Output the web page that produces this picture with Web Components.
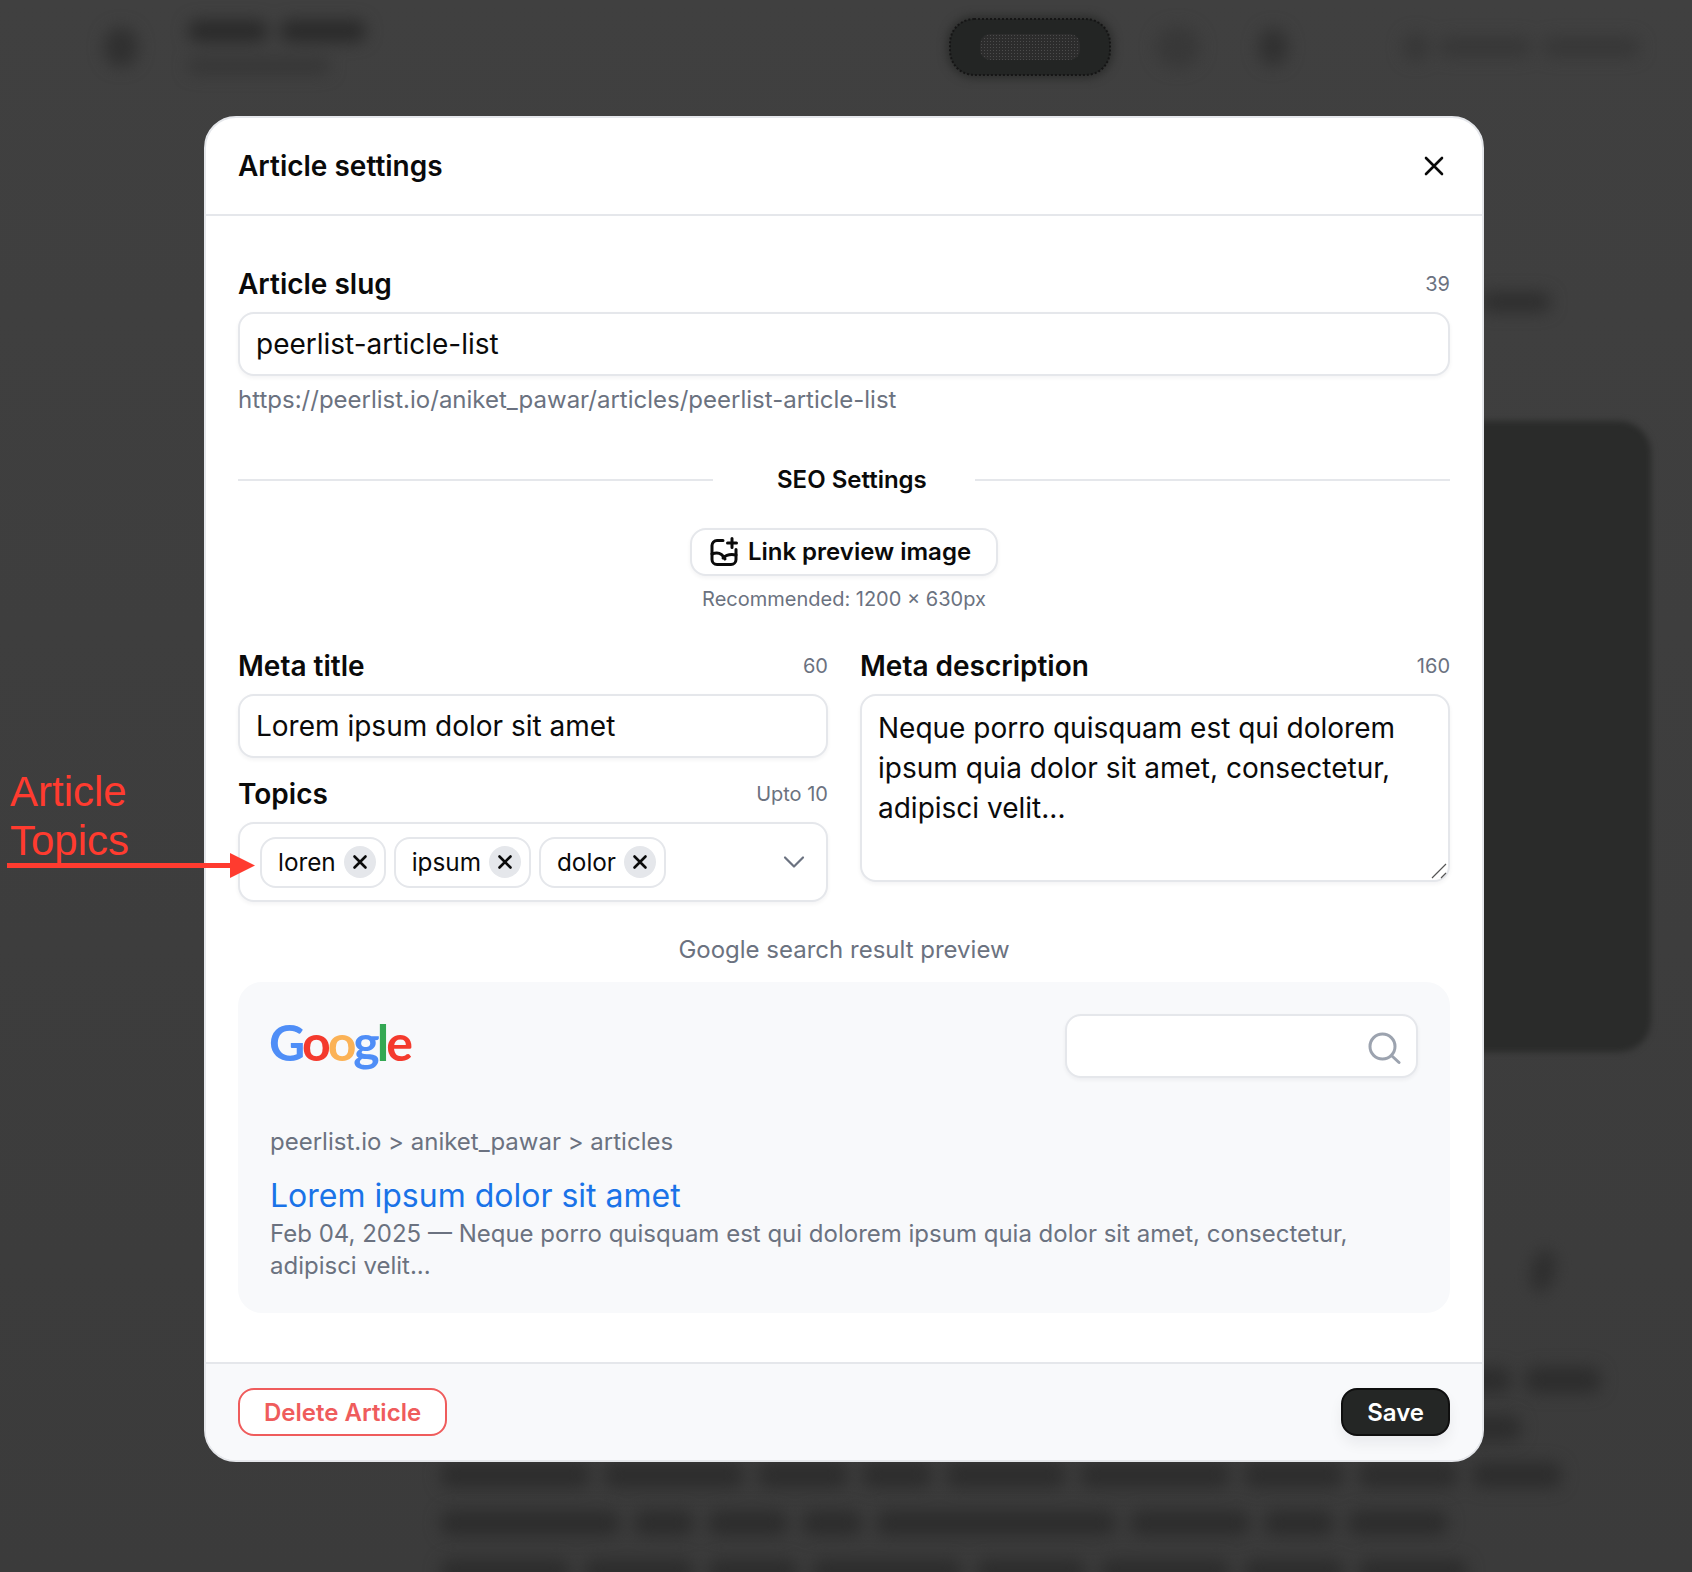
<!DOCTYPE html>
<html lang="en">
<head>
<meta charset="utf-8">
<title>Article settings</title>
<style>
  html, body { margin: 0; padding: 0; }
  body {
    position: relative;
    width: 1692px;
    height: 1572px;
    overflow: hidden;
    background: #3e3e3e;
    font-family: Inter, "Liberation Sans", sans-serif;
    color: #0a0a0a;
  }
</style>
</head>
<body>
<page-backdrop></page-backdrop>

<settings-modal>
  <span slot="title">Article settings</span>

  <field-label count="39">Article slug</field-label>
  <text-box>peerlist-article-list</text-box>
  <hint-text>https://peerlist.io/aniket_pawar/articles/peerlist-article-list</hint-text>

  <seo-divider>SEO Settings</seo-divider>
  <preview-image-button>Link preview image</preview-image-button>

  <meta-grid>
    <div slot="left">
      <field-label count="60">Meta title</field-label>
      <text-box>Lorem ipsum dolor sit amet</text-box>
      <field-label count="Upto 10" style="margin-top:19px">Topics</field-label>
      <topics-box>
        <topic-chip>loren</topic-chip>
        <topic-chip>ipsum</topic-chip>
        <topic-chip>dolor</topic-chip>
      </topics-box>
    </div>
    <div slot="right">
      <field-label count="160">Meta description</field-label>
      <text-area-box>Neque porro quisquam est qui dolorem ipsum quia dolor sit amet, consectetur, adipisci velit...</text-area-box>
    </div>
  </meta-grid>

  <google-preview></google-preview>

  <app-button slot="footer" kind="danger">Delete Article</app-button>
  <app-button slot="footer" kind="primary">Save</app-button>
</settings-modal>

<red-annotation></red-annotation>

<script>
  class PageBackdrop extends HTMLElement {
    constructor() {
      super();
      this.attachShadow({ mode: 'open' });
      this.shadowRoot.innerHTML = `
        <style>
          :host { display: block; height: 1572px; overflow: hidden; background: linear-gradient(#404040, #3b3b3b); }
          .top { display: flex; align-items: center; height: 94px; padding: 0 52px 0 104px; }
          .top > *, .main > * { filter: blur(8px); }
          .b { background: #2f2f2f; border-radius: 12px; }
          .back { width: 34px; height: 40px; border-radius: 50%; background: #303030; }
          .names { display: flex; flex-direction: column; gap: 16px; margin-left: 50px; flex: 1; }
          .t1 { display: flex; gap: 12px; }
          .t1 i { height: 22px; border-radius: 10px; background: #2a2a2a; }
          .t2 { width: 142px; height: 16px; background: #363636; }
          .top > .pill {
            filter: none;
            display: flex;
            align-items: center;
            justify-content: center;
            box-sizing: border-box;
            flex: none;
            width: 160px;
            height: 56px;
            border-radius: 24px;
            background: #232524;
            box-shadow: 0 0 10px 3px #2b2c2b;
            outline: 2px dotted #151515;
            outline-offset: -1px;
          }
          .pill i {
            width: 100px;
            height: 26px;
            border-radius: 10px;
            background-color: #2c2c2c;
            background-image: radial-gradient(#4c4c4c 1px, transparent 1px);
            background-size: 3px 3px;
          }
          .c1 { flex: none; width: 44px; height: 42px; border-radius: 50%; margin-left: 46px; background: #383838; }
          .c2 { flex: none; width: 30px; height: 38px; border-radius: 50%; margin-left: 58px; background: #313131; }
          .who { flex: none; display: flex; align-items: center; gap: 10px; margin-left: 115px; }
          .who i { height: 20px; border-radius: 10px; background: #373737; }
          .main { display: flex; flex-direction: column; padding: 0 41px 0 440px; }
          .s1 { width: 70px; height: 20px; margin: 198px 100px 0 auto; background: #2e2e2e; }
          .main > .block { filter: blur(3px); height: 631px; margin-top: 109px; margin-left: 600px; border-radius: 32px; background: #2a2b2a; }
          .oval { width: 24px; height: 44px; border-radius: 50%; margin: 197px 96px 0 auto; background: #2e2e2e; transform: rotate(12deg); }
          .line { display: flex; gap: 14px; height: 26px; }
          .line i { height: 26px; border-radius: 12px; background: #2d2d2d; }
          .l1 { margin: 74px 50px 0 auto; width: 170px; }
          .l2 { margin: 22px 130px 0 auto; width: 80px; }
          .l3 { margin-top: 21px; }
          .l4 { margin-top: 22px; }
          .l5 { margin-top: 23px; }
        </style>
        <div class="top">
          <div class="back"></div>
          <div class="names">
            <div class="t1"><i style="width:80px"></i><i style="width:86px"></i></div>
            <div class="b t2"></div>
          </div>
          <div class="pill"><i></i></div>
          <div class="c1"></div>
          <div class="c2"></div>
          <div class="who"><i style="width:26px;height:28px;border-radius:50%"></i><i style="width:93px"></i><i style="width:98px"></i></div>
        </div>
        <div class="main">
          <div class="b s1"></div>
          <div class="block"></div>
          <div class="oval"></div>
          <div class="line l1"><i style="width:80px"></i><i style="width:76px"></i></div>
          <div class="line l2"><i style="width:80px"></i></div>
          <div class="line l3"><i style="width:150px"></i><i style="width:140px"></i><i style="width:90px"></i><i style="width:70px"></i><i style="width:120px"></i><i style="width:150px"></i><i style="width:100px"></i><i style="width:100px"></i><i style="width:90px"></i></div>
          <div class="line l4"><i style="width:180px"></i><i style="width:60px"></i><i style="width:80px"></i><i style="width:60px"></i><i style="width:240px"></i><i style="width:120px"></i><i style="width:70px"></i><i style="width:100px"></i></div>
          <div class="line l5"><i style="width:130px"></i><i style="width:110px"></i><i style="width:90px"></i><i style="width:150px"></i><i style="width:110px"></i><i style="width:130px"></i><i style="width:100px"></i><i style="width:110px"></i></div>
        </div>
      `;
    }
  }
  customElements.define('page-backdrop', PageBackdrop);

  class SettingsModal extends HTMLElement {
    constructor() {
      super();
      this.attachShadow({ mode: 'open' });
      this.shadowRoot.innerHTML = `
        <style>
          :host { position: absolute; left: 204px; top: 116px; display: block; width: 1280px; }
          .card {
            box-sizing: border-box;
            height: 1346px;
            display: flex;
            flex-direction: column;
            background: #fff;
            border: 2px solid #e5e7eb;
            border-radius: 32px;
            overflow: hidden;
          }
          header {
            flex: none;
            display: flex;
            align-items: center;
            justify-content: space-between;
            height: 96px;
            padding: 0 32px;
            border-bottom: 2px solid #e5e7eb;
            font-size: 28px;
            font-weight: 600;
          }
          .body { flex: 1; padding: 51px 32px 0; }
          footer {
            flex: none;
            display: flex;
            align-items: center;
            justify-content: space-between;
            box-sizing: border-box;
            height: 98px;
            padding: 0 32px;
            background: #f8f9fb;
            border-top: 2px solid #e5e7eb;
          }
          svg { display: block; margin-right: 4px; }
        </style>
        <div class="card">
          <header>
            <slot name="title"></slot>
            <svg width="24" height="24" viewBox="0 0 24 24" fill="none" stroke="#0a0a0a" stroke-width="2.6" stroke-linecap="round">
              <path d="M4 4l16 16M20 4L4 20"/>
            </svg>
          </header>
          <div class="body"><slot></slot></div>
          <footer><slot name="footer"></slot></footer>
        </div>
      `;
    }
  }
  customElements.define('settings-modal', SettingsModal);

  class FieldLabel extends HTMLElement {
    static get observedAttributes() { return ['count']; }
    constructor() {
      super();
      this.attachShadow({ mode: 'open' });
      this.shadowRoot.innerHTML = `
        <style>
          :host { display: flex; align-items: center; justify-content: space-between; height: 34px; margin-bottom: 11px; }
          .name { font-size: 28px; font-weight: 600; color: #0a0a0a; }
          .count { font-size: 20px; color: #6b7280; }
        </style>
        <span class="name"><slot></slot></span>
        <span class="count"></span>
      `;
    }
    attributeChangedCallback(name, old, value) {
      this.shadowRoot.querySelector('.count').textContent = value;
    }
  }
  customElements.define('field-label', FieldLabel);

  class TextBox extends HTMLElement {
    constructor() {
      super();
      this.attachShadow({ mode: 'open' });
      this.shadowRoot.innerHTML = `
        <style>
          :host {
            display: flex;
            align-items: center;
            box-sizing: border-box;
            height: 64px;
            padding: 0 16px;
            background: #fff;
            border: 2px solid #e5e7eb;
            border-radius: 16px;
            box-shadow: 0 2px 4px rgba(17,24,39,.05);
            font-size: 28px;
            color: #0a0a0a;
          }
        </style>
        <slot></slot>
      `;
    }
  }
  customElements.define('text-box', TextBox);

  class HintText extends HTMLElement {
    constructor() {
      super();
      this.attachShadow({ mode: 'open' });
      this.shadowRoot.innerHTML = `
        <style>
          :host { display: block; margin-top: 7px; font-size: 24px; line-height: 34px; color: #6b7280; }
        </style>
        <slot></slot>
      `;
    }
  }
  customElements.define('hint-text', HintText);

  class SeoDivider extends HTMLElement {
    constructor() {
      super();
      this.attachShadow({ mode: 'open' });
      this.shadowRoot.innerHTML = `
        <style>
          :host { display: flex; align-items: center; height: 34px; margin-top: 46px; font-size: 24px; font-weight: 600; }
          i { flex: 1; height: 2px; background: #e5e7eb; }
          .l { flex: none; width: 475px; }
          span { margin: -2px 48px 0 64px; }
        </style>
        <i class="l"></i><span><slot></slot></span><i></i>
      `;
    }
  }
  customElements.define('seo-divider', SeoDivider);

  class PreviewImageButton extends HTMLElement {
    constructor() {
      super();
      this.attachShadow({ mode: 'open' });
      this.shadowRoot.innerHTML = `
        <style>
          :host { display: flex; flex-direction: column; align-items: center; margin-top: 31px; }
          .btn {
            display: flex;
            align-items: center;
            gap: 9px;
            box-sizing: border-box;
            height: 48px;
            padding: 0 25px 0 17px;
            background: #fff;
            border: 2px solid #e5e7eb;
            border-radius: 16px;
            box-shadow: 0 2px 4px rgba(17,24,39,.05);
            font-size: 24px;
            font-weight: 600;
          }
          .btn span { margin-bottom: 2px; }
          .rec { margin-top: 7px; font-size: 20px; line-height: 32px; color: #6b7280; }
        </style>
        <div class="btn">
          <svg width="30" height="30" viewBox="0 0 30 30" fill="none" stroke="#0a0a0a" stroke-width="3" stroke-linecap="round" stroke-linejoin="round">
            <path d="M14 3.5H8a5 5 0 0 0-5 5v14a5 5 0 0 0 5 5h14a5 5 0 0 0 5-5v-10"/>
            <path d="M23 1.500v9M18.500 6h9"/>
            <path d="M3 17c5-2 10-1 13 5M14 21c3-3 8-4 13-3"/>
          </svg>
          <span><slot></slot></span>
        </div>
        <div class="rec">Recommended: 1200 × 630px</div>
      `;
    }
  }
  customElements.define('preview-image-button', PreviewImageButton);

  class MetaGrid extends HTMLElement {
    constructor() {
      super();
      this.attachShadow({ mode: 'open' });
      this.shadowRoot.innerHTML = `
        <style>
          :host { display: grid; grid-template-columns: 590px 590px; column-gap: 32px; margin-top: 34px; }
        </style>
        <div><slot name="left"></slot></div>
        <div><slot name="right"></slot></div>
      `;
    }
  }
  customElements.define('meta-grid', MetaGrid);

  class TopicsBox extends HTMLElement {
    constructor() {
      super();
      this.attachShadow({ mode: 'open' });
      this.shadowRoot.innerHTML = `
        <style>
          :host {
            display: flex;
            align-items: center;
            gap: 8px;
            box-sizing: border-box;
            height: 80px;
            padding: 0 22px 0 20px;
            background: #fff;
            border: 2px solid #e5e7eb;
            border-radius: 16px;
            box-shadow: 0 2px 4px rgba(17,24,39,.05);
          }
          svg { margin-left: auto; margin-right: -1px; }
        </style>
        <slot></slot>
        <svg width="22" height="14" viewBox="0 0 22 14" fill="none" stroke="#6b7280" stroke-width="2.2" stroke-linecap="round" stroke-linejoin="round">
          <path d="M2 2.500l9 9 9-9"/>
        </svg>
      `;
    }
  }
  customElements.define('topics-box', TopicsBox);

  class TopicChip extends HTMLElement {
    constructor() {
      super();
      this.attachShadow({ mode: 'open' });
      this.shadowRoot.innerHTML = `
        <style>
          :host {
            display: flex;
            align-items: center;
            gap: 8px;
            box-sizing: border-box;
            height: 51px;
            padding: 0 8px 0 16px;
            background: #fff;
            border: 2px solid #e5e7eb;
            border-radius: 16px;
            font-size: 24.3px;
            color: #0a0a0a;
          }
          .x { display: flex; align-items: center; justify-content: center; width: 32px; height: 32px; border-radius: 50%; background: #e5e7eb; }
        </style>
        <span><slot></slot></span>
        <span class="x">
          <svg width="16" height="16" viewBox="0 0 16 16" fill="none" stroke="#0a0a0a" stroke-width="2.600" stroke-linecap="round"><path d="M2.500 2.500l11 11M13.500 2.500l-11 11"/></svg>
        </span>
      `;
    }
  }
  customElements.define('topic-chip', TopicChip);

  class TextAreaBox extends HTMLElement {
    constructor() {
      super();
      this.attachShadow({ mode: 'open' });
      this.shadowRoot.innerHTML = `
        <style>
          :host {
            position: relative;
            display: block;
            box-sizing: border-box;
            height: 188px;
            padding: 12px 16px;
            background: #fff;
            border: 2px solid #e5e7eb;
            border-radius: 16px;
            box-shadow: 0 2px 4px rgba(17,24,39,.05);
            font-size: 28px;
            line-height: 40px;
          }
          svg { position: absolute; right: 1px; bottom: 1px; }
        </style>
        <slot></slot>
        <svg width="16" height="16" viewBox="0 0 16 16" fill="none" stroke="#555" stroke-width="1.200"><path d="M1 15L15 1M10 15l5-5"/></svg>
      `;
    }
  }
  customElements.define('text-area-box', TextAreaBox);

  class GooglePreview extends HTMLElement {
    constructor() {
      super();
      this.attachShadow({ mode: 'open' });
      this.shadowRoot.innerHTML = `
        <style>
          :host { display: block; margin-top: 32px; }
          .cap { text-align: center; font-size: 24px; line-height: 32px; color: #6b7280; }
          .panel {
            box-sizing: border-box;
            height: 331px;
            margin-top: 16px;
            padding: 32px;
            background: #f8f9fb;
            border-radius: 24px;
            color: #6b7280;
          }
          .top { display: flex; justify-content: space-between; }
          .logo { font-family: Lato, sans-serif; font-size: 50px; line-height: 56px; height: 64px; letter-spacing: -3px; margin-left: -1px; }
          .logo b { font-weight: 700; }
          .search {
            display: flex;
            align-items: center;
            justify-content: flex-end;
            box-sizing: border-box;
            width: 353px;
            height: 64px;
            padding-right: 15px;
            background: #fff;
            border: 2px solid #e5e7eb;
            border-radius: 16px;
            box-shadow: 0 2px 4px rgba(17,24,39,.05);
          }
          .search svg { margin-top: 3px; }
          .crumb { margin-top: 48px; font-size: 24px; line-height: 32px; }
          .head { margin-top: 19px; font-size: 32px; line-height: 38px; color: #1a73e8; }
          .desc { margin-top: 3px; font-size: 24px; line-height: 32px; }
        </style>
        <div class="cap">Google search result preview</div>
        <div class="panel">
          <div class="top">
            <div class="logo"><b style="color:#4f8ef7">G</b><b style="color:#f43a2d">o</b><b style="color:#fbb256">o</b><b style="color:#4f8ef7">g</b><b style="color:#34a853">l</b><b style="color:#f43a2d">e</b></div>
            <div class="search">
              <svg width="34" height="34" viewBox="0 0 34 34" fill="none" stroke="#9ca3af" stroke-width="3" stroke-linecap="round"><circle cx="15.500" cy="15.500" r="12.500"/><path d="M25 25l7 6.500"/></svg>
            </div>
          </div>
          <div class="crumb">peerlist.io &gt; aniket_pawar &gt; articles</div>
          <div class="head">Lorem ipsum dolor sit amet</div>
          <div class="desc">Feb 04, 2025 — Neque porro quisquam est qui dolorem ipsum quia dolor sit amet, consectetur, adipisci velit...</div>
        </div>
      `;
    }
  }
  customElements.define('google-preview', GooglePreview);

  class AppButton extends HTMLElement {
    constructor() {
      super();
      this.attachShadow({ mode: 'open' });
      this.shadowRoot.innerHTML = `
        <style>
          :host {
            display: flex;
            align-items: center;
            box-sizing: border-box;
            height: 48px;
            padding: 0 24px;
            border-radius: 16px;
            font-size: 24px;
            font-weight: 600;
          }
          :host([kind="danger"]) { background: #fff; border: 2px solid #ef5c5c; color: #ef5c5c; }
          :host([kind="primary"]) { background: #242625; border: 2px solid #0f0f0f; color: #fff; box-shadow: 0 8px 14px rgba(17,24,39,.06); }
        </style>
        <slot></slot>
      `;
    }
  }
  customElements.define('app-button', AppButton);

  class RedAnnotation extends HTMLElement {
    constructor() {
      super();
      this.attachShadow({ mode: 'open' });
      this.shadowRoot.innerHTML = `
        <style>
          :host { position: absolute; left: 7px; top: 767px; display: block; width: 250px; color: #ff3b2f; font-family: "Liberation Sans", sans-serif; font-size: 42px; line-height: 49px; }
          .text { padding-left: 3px; }
          .arrow { display: block; margin-top: -12px; }
        </style>
        <div class="text">Article<br>Topics</div>
        <svg class="arrow" width="250" height="26" viewBox="0 0 250 26" fill="#ff3b2f">
          <rect x="0" y="10" width="224" height="5"/>
          <polygon points="223,0 248,12.500 223,25"/>
        </svg>
      `;
    }
  }
  customElements.define('red-annotation', RedAnnotation);
</script>
</body>
</html>
